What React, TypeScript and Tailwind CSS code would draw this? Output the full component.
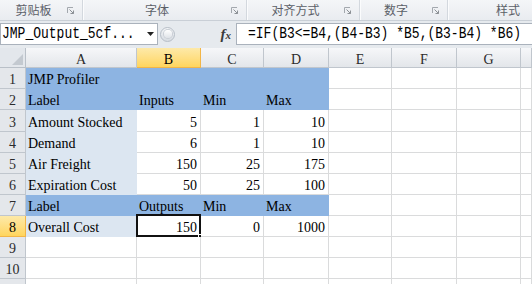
import React from 'react';

type Fill = 'blue' | 'light';
type Cell = { v?: string; r?: boolean; fill?: Fill; sel?: boolean };

const serif = "font-['Liberation_Serif','Noto_Sans_CJK_TC',serif]";
const mono = "font-['Liberation_Mono','Noto_Sans_CJK_SC',monospace]";
const cjk = "font-['Noto_Sans_CJK_SC','Noto_Sans_CJK_TC',sans-serif]";

const COLS = ['A', 'B', 'C', 'D', 'E', 'F', 'G', ''];

const blueRow = (a: string, b: string, c: string, d: string): Cell[] => [
  { v: a, fill: 'blue' },
  { v: b, fill: 'blue' },
  { v: c, fill: 'blue' },
  { v: d, fill: 'blue' },
];

const dataRow = (label: string, b: string, c: string, d: string, sel = false): Cell[] => [
  { v: label, fill: 'light' },
  { v: b, r: true, sel },
  { v: c, r: true },
  { v: d, r: true },
];

const ROWS: Cell[][] = [
  blueRow('JMP Profiler', '', '', ''),
  blueRow('Label', 'Inputs', 'Min', 'Max'),
  dataRow('Amount Stocked', '5', '1', '10'),
  dataRow('Demand', '6', '1', '10'),
  dataRow('Air Freight', '150', '25', '175'),
  dataRow('Expiration Cost', '50', '25', '100'),
  blueRow('Label', 'Outputs', 'Min', 'Max'),
  dataRow('Overall Cost', '150', '0', '1000', true),
  [],
  [],
  [],
];

function Launcher() {
  return (
    <svg width="7" height="7" viewBox="0 0 7 7" className="shrink-0">
      <path d="M0.5 6V0.5H6" fill="none" stroke="#a3a8ae" strokeWidth="1" />
      <path d="M2.5 2.5 6.5 6.5M6.5 3.5V6.5H3.5" fill="none" stroke="#8c9196" strokeWidth="1" />
    </svg>
  );
}

function Group({ label, launcher = true, className = '' }: { label: string; launcher?: boolean; className?: string }) {
  return (
    <div className={`flex h-full items-center border-r border-[#d3d8de] shadow-[1px_0_0_#fbfcfd] ${className}`}>
      <span className={`flex-1 text-center text-[12px] text-[#5b6068] ${cjk}`}>{label}</span>
      {launcher && (
        <span className="mr-[8px]">
          <Launcher />
        </span>
      )}
    </div>
  );
}

function GridCell({ c, tall }: { c: Cell; tall: boolean }) {
  const tone =
    c.fill === 'blue'
      ? 'bg-[#8db4e2] border-[#8db4e2]'
      : c.fill === 'light'
        ? 'bg-[#dce6f1] border-[#dce6f1]'
        : 'bg-white border-[#dadbdc]';
  return (
    <div
      className={`relative flex items-end whitespace-nowrap border-r border-b pb-[1px] text-[14px] leading-[15px] text-black ${serif} ${tone} ${
        tall ? 'h-[22px]' : 'h-[21px]'
      } ${c.r ? 'justify-end pr-[3px]' : 'pl-[2px]'}`}
    >
      {c.v}
      {c.sel && (
        <div className="absolute -top-[2px] -left-[1px] -right-[1px] -bottom-[1px] border-2 border-[#111]">
          <div className="absolute -right-[4px] -bottom-[4px] h-[5px] w-[5px] border border-white bg-[#111]" />
        </div>
      )}
    </div>
  );
}

export default function App() {
  return (
    <div className="h-[284px] w-[532px] overflow-hidden bg-white">
      {/* Ribbon group labels */}
      <div className="flex h-[21px] border-b border-[#c9cfd6] bg-linear-to-b from-[#f4f6f8] to-[#e9ecf0]">
        <Group label="剪贴板" className="w-[83px]" />
        <Group label="字体" className="w-[164px]" />
        <Group label="对齐方式" className="w-[113px]" />
        <Group label="数字" className="w-[88px]" />
        <div className="flex h-full flex-1 items-center">
          <span className={`ml-[48px] text-[12px] text-[#5b6068] ${cjk}`}>样式</span>
        </div>
      </div>

      {/* Formula bar */}
      <div className="flex h-[27px] items-start bg-[#e6eaee]">
        <div className="mt-[2px] flex h-[22px] w-[158px] items-center justify-between border border-[#aab2bc] bg-white pr-[3px]">
          <span className={`inline-block scale-y-[1.2] pl-[1px] text-[13px] text-black ${mono}`}>JMP_Output_5cf...</span>
          <svg width="7" height="4" viewBox="0 0 7 4">
            <path d="M0 0H7L3.5 4Z" fill="#222" />
          </svg>
        </div>
        <div className="mt-[2px] flex h-[22px] w-[78px] items-center pl-[2px]">
          <div className="flex h-[15px] w-[15px] items-center justify-center rounded-full border border-[#b7bec7] bg-linear-to-b from-[#f3f5f7] to-[#d7dce2]">
            <div className="h-[8px] w-[8px] rounded-full bg-linear-to-b from-[#ffffff] to-[#dfe3e8] shadow-[0_0_0_1px_#c9ced5]" />
          </div>
          <span className={`ml-auto mr-[5px] text-[15px] font-bold italic text-[#3a3a3a] ${serif}`}>
            f<span className="text-[11px]">x</span>
          </span>
        </div>
        <div className="mt-[2px] flex h-[22px] flex-1 items-center border-y border-l border-[#aab2bc] bg-white pl-[11px]">
          <span className={`inline-block scale-y-[1.2] whitespace-pre text-[13px] text-black ${mono}`}>
            =IF(B3&lt;=B4,(B4-B3) *B5,(B3-B4) *B6)
          </span>
        </div>
      </div>

      {/* Sheet */}
      <div className="grid grid-cols-[26px_111px_64px_63px_65px_63px_65px_64px_1fr]">
        <div className="flex h-[20px] items-end justify-end border-r border-b border-[#b9c0c8] bg-[#e3e7ec] p-[2px]">
          <svg width="11" height="11" viewBox="0 0 11 11">
            <path d="M11 0V11H0Z" fill="#c3c9d0" />
          </svg>
        </div>
        {COLS.map((k) => (
          <div
            key={k || 'H'}
            className={`flex h-[20px] items-end justify-center border-r border-b text-[14px] leading-[15px] ${serif} ${
              k === 'B'
                ? 'border-[#f2b547] bg-linear-to-b from-[#fde9a8] to-[#ffd55c] text-black'
                : 'border-[#c0c6cd] bg-linear-to-b from-[#f6f7f9] to-[#e3e6ea] text-[#2b2b2b]'
            }`}
          >
            {k}
          </div>
        ))}

        {ROWS.map((row, ri) => (
          <React.Fragment key={ri}>
            <div
              className={`flex items-end justify-center border-r border-b pb-[1px] text-[14px] leading-[15px] ${serif} ${
                ri === 2 ? 'h-[22px]' : 'h-[21px]'
              } ${
                ri === 7
                  ? 'border-[#f2b547] bg-linear-to-b from-[#fde9a8] to-[#ffd55c] text-black'
                  : 'border-[#c0c6cd] bg-[#e4e7eb] text-[#2b2b2b]'
              }`}
            >
              {ri < 10 ? ri + 1 : ''}
            </div>
            {COLS.map((_, ci) => (
              <GridCell key={ci} c={row[ci] ?? {}} tall={ri === 2} />
            ))}
          </React.Fragment>
        ))}
      </div>
    </div>
  );
}
